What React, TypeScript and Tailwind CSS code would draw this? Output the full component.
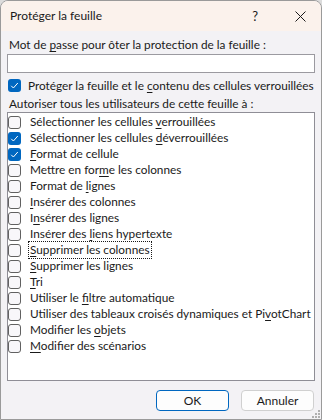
import React from 'react';

type Item = { pre: string; key: string; post: string; checked?: boolean; focused?: boolean };

const items: Item[] = [
  { pre: 'Sélectionner les cellules ', key: 'v', post: 'errouillées' },
  { pre: 'Sélectionner les cellules ', key: 'd', post: 'éverrouillées', checked: true },
  { pre: '', key: 'F', post: 'ormat de cellule', checked: true },
  { pre: 'Mettre en for', key: 'm', post: 'e les colonnes' },
  { pre: 'Format de ', key: 'l', post: 'ignes' },
  { pre: '', key: 'I', post: 'nsérer des colonnes' },
  { pre: 'I', key: 'n', post: 'sérer des lignes' },
  { pre: 'Insérer des ', key: 'l', post: 'iens hypertexte' },
  { pre: '', key: 'S', post: 'upprimer les colonnes', focused: true },
  { pre: '', key: 'S', post: 'upprimer les lignes' },
  { pre: '', key: 'T', post: 'ri' },
  { pre: 'Utiliser le ', key: 'f', post: 'iltre automatique' },
  { pre: 'Utiliser des tableaux croisés dynamiques et Pi', key: 'v', post: 'otChart' },
  { pre: 'Modifier les ', key: 'o', post: 'bjets' },
  { pre: '', key: 'M', post: 'odifier des scénarios' },
];

const Check: React.FC<{ checked?: boolean }> = ({ checked }) =>
  checked ? (
    <span className="w-[13px] h-[13px] rounded-[3px] bg-[#0067c0] flex items-center justify-center shrink-0">
      <svg width="9" height="9" viewBox="0 0 9 9" fill="none">
        <path d="M1.2 4.8 L3.4 7 L7.8 2" stroke="#ffffff" strokeWidth="1" />
      </svg>
    </span>
  ) : (
    <span className="w-[13px] h-[13px] rounded-[3px] border border-[#616161] bg-[#f8f7fa] shrink-0" />
  );

const Key: React.FC<{ k: string }> = ({ k }) => (
  <span className="underline underline-offset-[2px] decoration-[1px]">{k}</span>
);

export default function App() {
  return (
    <div
      className="w-[322px] h-[420px] bg-[#dcdcdc] text-[11.8px] text-[#1a1a1a] leading-4 whitespace-nowrap"
      style={{ fontFamily: 'Lato, "Liberation Sans", Arial, sans-serif' }}
    >
      <div className="relative w-full h-full rounded-t-[8px] border border-[#9a9a9a] bg-[#f3f2f5] flex flex-col overflow-hidden">
        <div className="h-[30px] bg-[#fbf2ec] flex items-center pl-[9px] shrink-0">
          <span className="text-[12px]">Protéger la feuille</span>
          <span className="ml-auto mr-[37px] text-[13px]">?</span>
          <svg width="11" height="11" viewBox="0 0 11 11" className="mr-[15px]">
            <path d="M0.5 0.5 L10.5 10.5 M10.5 0.5 L0.5 10.5" stroke="#1a1a1a" strokeWidth="1" />
          </svg>
        </div>
        <div className="flex flex-col px-[6px] pt-[6px]">
          <div className="h-4 pl-[2px]">
            Mot de <Key k="p" />asse pour ôter la protection de la feuille :
          </div>
          <div className="mt-[1px] h-[19px] border border-[#9b9aa0] bg-white" />
          <div className="mt-[6px] h-[13px] flex items-center gap-[7px] pl-[1px]">
            <Check checked />
            <span>
              Protéger la feuille et le <Key k="c" />ontenu des cellules verrouillées
            </span>
          </div>
          <div className="mt-[4px] h-4 pl-[2px]">Autoriser tous les utilisateurs de cette feuille à :</div>
          <div className="mt-0 h-[269px] border border-[#8f8e96] bg-white pt-[1px]">
            {items.map((it, i) => (
              <div key={i} className="h-4 flex items-center">
                <span className="w-[22px] flex items-center">
                  <Check checked={it.checked} />
                </span>
                <span
                  className={
                    it.focused
                      ? 'outline outline-1 outline-dotted outline-[#1a1a1a] -ml-[1px] px-[1px]'
                      : ''
                  }
                >
                  {it.pre}
                  <Key k={it.key} />
                  {it.post}
                </span>
              </div>
            ))}
          </div>
        </div>
        <div className="flex justify-end gap-[12px] pr-[7px] mt-[9px]">
          <button className="w-[73px] h-[21px] rounded-[4px] border border-[#0067c0] bg-[#fdfdfd] text-[12px]">
            OK
          </button>
          <button className="w-[73px] h-[21px] rounded-[4px] border border-[#d0d0d0] bg-[#fdfdfd] text-[12px]">
            Annuler
          </button>
        </div>
        {/* size grip */}
        <svg width="8" height="8" viewBox="0 0 8 8" className="absolute right-[1px] bottom-[1px]">
          <rect x="6" y="0" width="2" height="2" fill="#b0b0b0" />
          <rect x="3" y="3" width="2" height="2" fill="#b0b0b0" />
          <rect x="6" y="3" width="2" height="2" fill="#b0b0b0" />
          <rect x="0" y="6" width="2" height="2" fill="#b0b0b0" />
          <rect x="3" y="6" width="2" height="2" fill="#b0b0b0" />
          <rect x="6" y="6" width="2" height="2" fill="#b0b0b0" />
        </svg>
      </div>
    </div>
  );
}
